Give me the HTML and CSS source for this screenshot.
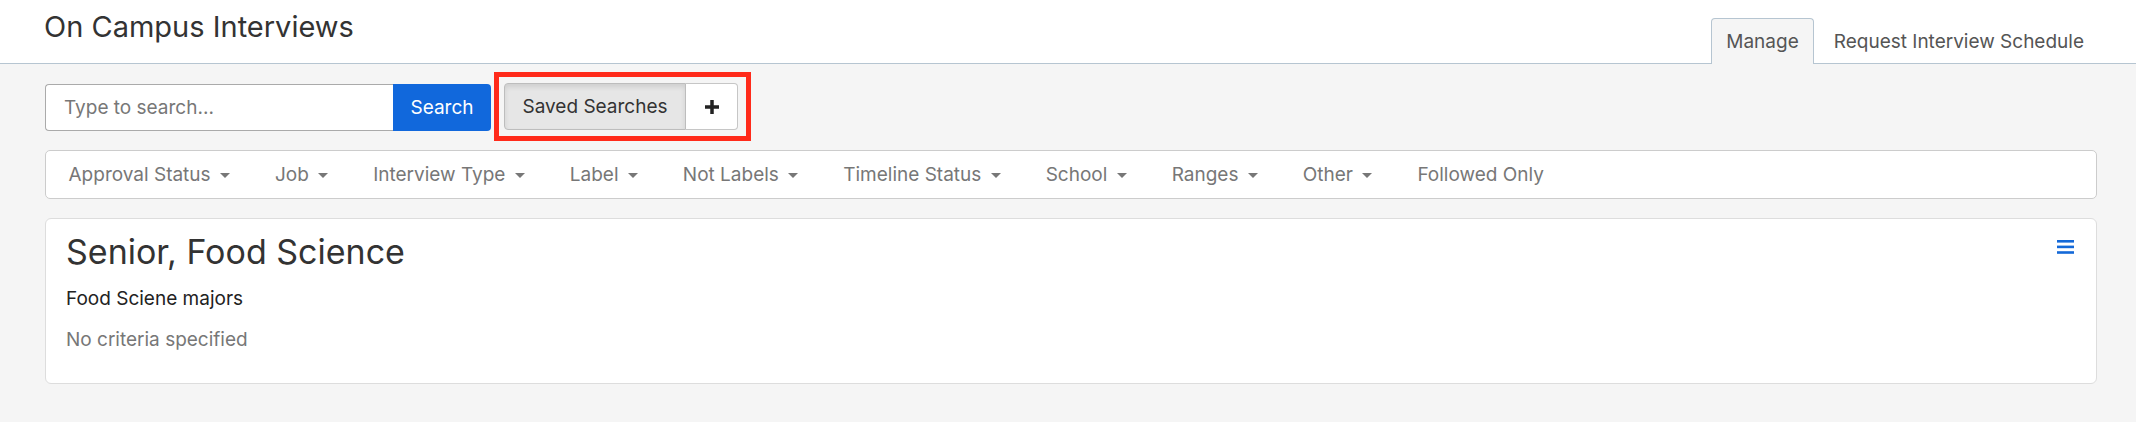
FILE: index.html
```html
<!DOCTYPE html>
<html lang="en">
<head>
  <meta charset="UTF-8" />
  <meta name="viewport" content="width=device-width, initial-scale=1.0"/>
  <title>On Campus Interviews</title>
  <link rel="stylesheet" href="styles.css">
</head>
<body>
  <header class="page-header">
    <h1>On Campus Interviews</h1>
    <nav class="tabs">
      <a href="#" class="tab active">Manage</a>
      <a href="#" class="tab">Request Interview Schedule</a>
    </nav>
  </header>

  <main class="content">
    <div class="toolbar">
      <form class="search-group" onsubmit="return false">
        <input type="text" class="search-input" placeholder="Type to search..." />
        <button type="submit" class="search-btn">Search</button>
      </form>

      <div class="highlight">
        <div class="btn-group">
          <button class="btn saved active">Saved Searches</button>
          <button class="btn add" title="Save search">
            <svg width="14" height="14" viewBox="0 0 14 14">
              <rect x="5.25" y="0" width="3.5" height="14" fill="#222"/>
              <rect x="0" y="5.25" width="14" height="3.5" fill="#222"/>
            </svg>
          </button>
        </div>
      </div>
    </div>

    <div class="filter-bar">
      <a href="#" class="filter">Approval Status <span class="caret"></span></a>
      <a href="#" class="filter">Job <span class="caret"></span></a>
      <a href="#" class="filter">Interview Type <span class="caret"></span></a>
      <a href="#" class="filter">Label <span class="caret"></span></a>
      <a href="#" class="filter">Not Labels <span class="caret"></span></a>
      <a href="#" class="filter">Timeline Status <span class="caret"></span></a>
      <a href="#" class="filter">School <span class="caret"></span></a>
      <a href="#" class="filter">Ranges <span class="caret"></span></a>
      <a href="#" class="filter">Other <span class="caret"></span></a>
      <a href="#" class="filter">Followed Only</a>
    </div>

    <section class="card">
      <div class="card-head">
        <h2>Senior, Food Science</h2>
        <a href="#" class="menu-icon" title="Actions">
          <svg width="17" height="14" viewBox="0 0 17 14">
            <rect x="0" y="0" width="17" height="2.6" fill="#1469d8"/>
            <rect x="0" y="5.6" width="17" height="2.6" fill="#1469d8"/>
            <rect x="0" y="11.2" width="17" height="2.6" fill="#1469d8"/>
          </svg>
        </a>
      </div>
      <p class="desc">Food Sciene majors</p>
      <p class="criteria">No criteria specified</p>
    </section>
  </main>
</body>
</html>
```

FILE: styles.css
```css
/* Base */
body {
  margin: 0;
  padding: 0;
  background-color: #f5f5f5;
  font-family: 'Inter', 'Liberation Sans', sans-serif;
  color: #333;
}

a {
  text-decoration: none;
}

/* Header + tabs */
.page-header {
  background-color: #fff;
  height: 63px;
  border-bottom: 1px solid #b6c5d1;
  display: flex;
  justify-content: space-between;
  padding: 0 34px 0 44px;
}

.page-header h1 {
  margin: 0;
  padding-top: 9px;
  font-size: 29px;
  font-weight: 400;
  line-height: 36px;
  color: #333;
}

.tabs {
  display: flex;
  align-self: flex-end;
  gap: 2px;
  margin-bottom: -1px;
}

.tab {
  display: block;
  height: 45px;
  line-height: 45px;
  padding: 0 17px;
  font-size: 19px;
  color: #555;
  border: 1px solid transparent;
  border-bottom: none;
  border-radius: 4px 4px 0 0;
}

.tab.active {
  padding: 0 14px;
  background-color: #f5f5f5;
  border-color: #b6c5d1;
}

/* Main area */
.content {
  padding: 8px 39px 40px 45px;
}

.toolbar {
  display: flex;
  align-items: flex-start;
}

.search-group {
  display: flex;
  margin: 12px 0 0 0;
}

.search-input {
  width: 348px;
  height: 47px;
  box-sizing: border-box;
  padding: 0 18px;
  border: 1px solid #aaa;
  border-right: none;
  border-radius: 4px 0 0 4px;
  font-family: inherit;
  font-size: 19px;
  color: #333;
  background: #fff;
}

.search-input::placeholder {
  color: #777;
}

.search-btn {
  height: 47px;
  width: 98px;
  border: none;
  border-radius: 0 4px 4px 0;
  background-color: #1168dc;
  color: #fff;
  font-family: inherit;
  font-size: 19px;
  cursor: pointer;
}

/* red annotation frame around saved searches */
.highlight {
  margin-left: 3px;
  border: 5px solid #ff2a1a;
  padding: 6px 8px 6px 5px;
}

.btn-group {
  display: flex;
  height: 47px;
}

.btn {
  font-family: inherit;
  font-size: 19px;
  color: #333;
  border: 1px solid #c6c6c6;
  background-color: #fff;
  cursor: pointer;
}

.btn.saved {
  width: 182px;
  border-radius: 4px 0 0 4px;
  background-color: #e6e6e6;
  border-color: #bdbdbd;
  box-shadow: inset 0 3px 5px rgba(0, 0, 0, 0.1);
}

.btn.add {
  width: 52px;
  border-left: none;
  border-radius: 0 4px 4px 0;
  display: flex;
  align-items: center;
  justify-content: center;
}

/* Filters */
.filter-bar {
  margin-top: 9px;
  display: flex;
  height: 47px;
  align-items: center;
  background-color: #fff;
  border: 1px solid #ccc;
  border-radius: 5px;
}

.filter {
  padding: 0 22.5px;
  font-size: 19px;
  color: #777;
  white-space: nowrap;
}

.caret {
  display: inline-block;
  width: 0;
  height: 0;
  margin-left: 4px;
  vertical-align: middle;
  border-top: 5px solid #777;
  border-left: 5px solid transparent;
  border-right: 5px solid transparent;
}

/* Saved search card */
.card {
  margin-top: 19px;
  background-color: #fff;
  border: 1px solid #ddd;
  border-radius: 6px;
  padding: 14px 22px 30px 20px;
}

.card-head {
  display: flex;
  justify-content: space-between;
  align-items: flex-start;
}

.card-head h2 {
  margin: 0;
  font-size: 34px;
  font-weight: 400;
  line-height: 38px;
  color: #333;
}

.menu-icon {
  margin-top: 7px;
  line-height: 0;
}

.desc {
  margin: 14px 0 0 0;
  font-size: 19px;
  line-height: 27px;
  color: #222;
}

.criteria {
  margin: 14px 0 0 0;
  font-size: 19px;
  line-height: 27px;
  color: #777;
}
```
